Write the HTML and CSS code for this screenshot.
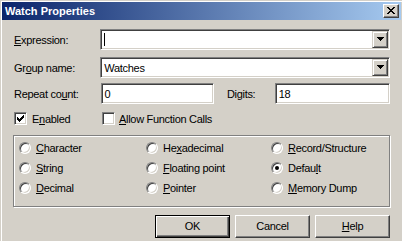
FILE: index.html
```html
<!DOCTYPE html>
<html>
<head>
<meta charset="utf-8">
<link rel="stylesheet" href="styles.css">
</head>
<body>
<div class="window">
  <div class="titlebar">
    <span class="title">Watch Properties</span>
    <div class="close">
      <svg width="8" height="7" viewBox="0 0 8 7" shape-rendering="crispEdges"><path d="M0 0h2v1h-2zM6 0h2v1h-2zM1 1h2v1h-2zM5 1h2v1h-2zM2 2h4v1h-4zM3 3h2v1h-2zM2 4h4v1h-4zM1 5h2v1h-2zM5 5h2v1h-2zM0 6h2v1h-2zM6 6h2v1h-2z" fill="#000"/></svg>
    </div>
  </div>
  <div class="body">
    <div class="row r1">
      <span class="lbl"><u>E</u>xpression:</span>
      <div class="combo">
        <div class="field"><span class="caret"></span></div>
        <div class="dd"><svg width="7" height="4" viewBox="0 0 7 4" shape-rendering="crispEdges"><path d="M0 0h7v1h-7zM1 1h5v1h-5zM2 2h3v1h-3zM3 3h1v1h-1z" fill="#000"/></svg></div>
      </div>
    </div>
    <div class="row r2">
      <span class="lbl">Gr<u>o</u>up name:</span>
      <div class="combo">
        <div class="field">Watches</div>
        <div class="dd"><svg width="7" height="4" viewBox="0 0 7 4" shape-rendering="crispEdges"><path d="M0 0h7v1h-7zM1 1h5v1h-5zM2 2h3v1h-3zM3 3h1v1h-1z" fill="#000"/></svg></div>
      </div>
    </div>
    <div class="row r3">
      <span class="lbl">Repeat co<u>u</u>nt:</span>
      <div class="edit e1">0</div>
      <span class="digits">Digits:</span>
      <div class="edit e2">18</div>
    </div>
    <div class="row r4">
      <div class="chkitem first">
        <span class="chk"><svg width="7" height="7" viewBox="0 0 7 7" shape-rendering="crispEdges"><path d="M6 0h1v1h-1zM5 1h2v1h-2zM0 2h1v1h-1zM4 2h3v1h-3zM0 3h2v1h-2zM3 3h3v1h-3zM0 4h5v1h-5zM1 5h3v1h-3zM2 6h1v1h-1z" fill="#000"/></svg></span>
        <span class="chktext">E<u>n</u>abled</span>
      </div>
      <div class="chkitem">
        <span class="chk"></span>
        <span class="chktext second"><u>A</u>llow Function Calls</span>
      </div>
    </div>
    <div class="group">
      <div class="radio"><span class="rb"></span><span><u>C</u>haracter</span></div>
      <div class="radio"><span class="rb"></span><span>He<u>x</u>adecimal</span></div>
      <div class="radio"><span class="rb"></span><span><u>R</u>ecord/Structure</span></div>
      <div class="radio"><span class="rb"></span><span><u>S</u>tring</span></div>
      <div class="radio"><span class="rb"></span><span><u>F</u>loating point</span></div>
      <div class="radio"><span class="rb on"></span><span>Defau<u>l</u>t</span></div>
      <div class="radio"><span class="rb"></span><span><u>D</u>ecimal</span></div>
      <div class="radio"><span class="rb"></span><span><u>P</u>ointer</span></div>
      <div class="radio"><span class="rb"></span><span><u>M</u>emory Dump</span></div>
    </div>
    <div class="buttons">
      <div class="btn default"><span>OK</span></div>
      <div class="btn"><span>Cancel</span></div>
      <div class="btn"><span><u>H</u>elp</span></div>
    </div>
  </div>
</div>
</body>
</html>
```

FILE: styles.css
```css
* { box-sizing: border-box; }
html, body { margin: 0; padding: 0; }
body {
  width: 402px;
  height: 241px;
  overflow: hidden;
  background: #d4d0c8;
  font-family: "Liberation Sans", Arial, sans-serif;
  font-size: 11px;
  color: #000;
}
u { text-decoration: underline; text-underline-offset: 1px; }

.window {
  width: 402px;
  height: 241px;
  background: #d4d0c8;
  box-shadow: inset 1px 1px 0 #d4d0c8, inset 2px 2px 0 #fff;
  padding: 2px 1px 0 2px;
}

.titlebar {
  height: 18px;
  background: linear-gradient(to right, #0a246a, #a6caf0);
  display: flex;
  align-items: center;
  justify-content: space-between;
  padding: 0 2px 0 3px;
}
.title {
  color: #fff;
  font-weight: bold;
  font-size: 11px;
  letter-spacing: 0;
  padding-bottom: 1px;
}
.close {
  width: 16px;
  height: 14px;
  background: #d4d0c8;
  border-top: 1px solid #fff;
  border-left: 1px solid #fff;
  border-right: 1px solid #404040;
  border-bottom: 1px solid #404040;
  box-shadow: inset -1px -1px 0 #808080;
  display: flex;
  align-items: center;
  justify-content: center;
  padding: 0 1px 1px 0;
}
.close svg { display: block; }

.body {
  padding: 0 11px 0 11px;
  display: flex;
  flex-direction: column;
}
.row { display: flex; align-items: center; }
.r1 { margin-top: 9px; }
.r2 { margin-top: 7px; }
.r3 { margin-top: 5px; }
.r4 { margin-top: 8px; height: 13px; }

.lbl {
  width: 88px;
  padding-left: 1px;
  letter-spacing: -0.3px;
}

.combo, .edit {
  height: 21px;
  background: #fff;
  border-top: 1px solid #808080;
  border-left: 1px solid #808080;
  border-right: 1px solid #fff;
  border-bottom: 1px solid #fff;
  box-shadow: inset 1px 1px 0 #404040, inset -1px -1px 0 #d4d0c8;
}
.combo {
  width: 292px;
  display: flex;
  padding: 1px;
}
.field {
  flex: 1;
  display: flex;
  align-items: center;
  padding-left: 2px;
  letter-spacing: -0.3px;
}
.caret {
  display: block;
  width: 1px;
  height: 13px;
  background: #000;
}
.dd {
  width: 16px;
  height: 17px;
  background: #d4d0c8;
  border-top: 1px solid #d4d0c8;
  border-left: 1px solid #d4d0c8;
  border-right: 1px solid #404040;
  border-bottom: 1px solid #404040;
  box-shadow: inset 1px 1px 0 #fff, inset -1px -1px 0 #808080;
  display: flex;
  align-items: center;
  justify-content: center;
  padding-bottom: 1px;
}
.dd svg { display: block; }

.edit {
  display: flex;
  align-items: center;
  padding-left: 3px;
  letter-spacing: -0.3px;
}
.e1 { width: 114px; }
.digits { margin-left: 13px; width: 48px; letter-spacing: -0.3px; }
.e2 { width: 116px; }

.chkitem { display: flex; align-items: center; }
.chkitem.first { width: 88px; margin-left: 1px; }
.chk {
  width: 13px;
  height: 13px;
  background: #fff;
  border-top: 1px solid #808080;
  border-left: 1px solid #808080;
  border-right: 1px solid #fff;
  border-bottom: 1px solid #fff;
  box-shadow: inset 1px 1px 0 #404040, inset -1px -1px 0 #d4d0c8;
  display: flex;
  padding: 2px 0 0 2px;
}
.chk svg { display: block; }
.chktext { margin-left: 5px; letter-spacing: -0.3px; }
.chktext.second { margin-left: 4px; }

.group {
  margin-top: 10px;
  height: 72px;
  border: 1px solid #808080;
  box-shadow: inset 1px 1px 0 #fff, 1px 1px 0 #fff;
  display: grid;
  grid-template-columns: 127px 125px auto;
  grid-auto-rows: 20px;
  padding: 2px 0 0 5px;
}
.radio {
  display: flex;
  align-items: center;
  gap: 5px;
  letter-spacing: -0.3px;
}
.rb {
  width: 12px;
  height: 12px;
  border-radius: 50%;
  background: #fff;
  border-top: 1px solid #808080;
  border-left: 1px solid #808080;
  border-right: 1px solid #fff;
  border-bottom: 1px solid #fff;
  box-shadow: inset 1px 1px 0 #404040, inset -1px -1px 0 #d4d0c8;
  position: relative;
  flex: none;
}
.rb.on::after {
  content: "";
  position: absolute;
  left: 3px;
  top: 3px;
  width: 4px;
  height: 4px;
  border-radius: 50%;
  background: #000;
}

.buttons {
  margin-top: 8px;
  display: flex;
  justify-content: flex-end;
  gap: 5px;
}
.btn {
  width: 75px;
  height: 23px;
  background: #d4d0c8;
  border-top: 1px solid #fff;
  border-left: 1px solid #fff;
  border-right: 1px solid #404040;
  border-bottom: 1px solid #404040;
  box-shadow: inset -1px -1px 0 #808080;
  display: flex;
  align-items: center;
  justify-content: center;
  letter-spacing: -0.3px;
  padding-bottom: 1px;
}
.btn.default {
  border: 1px solid #000;
  box-shadow: inset 1px 1px 0 #fff, inset -1px -1px 0 #404040, inset -2px -2px 0 #808080;
}
```
